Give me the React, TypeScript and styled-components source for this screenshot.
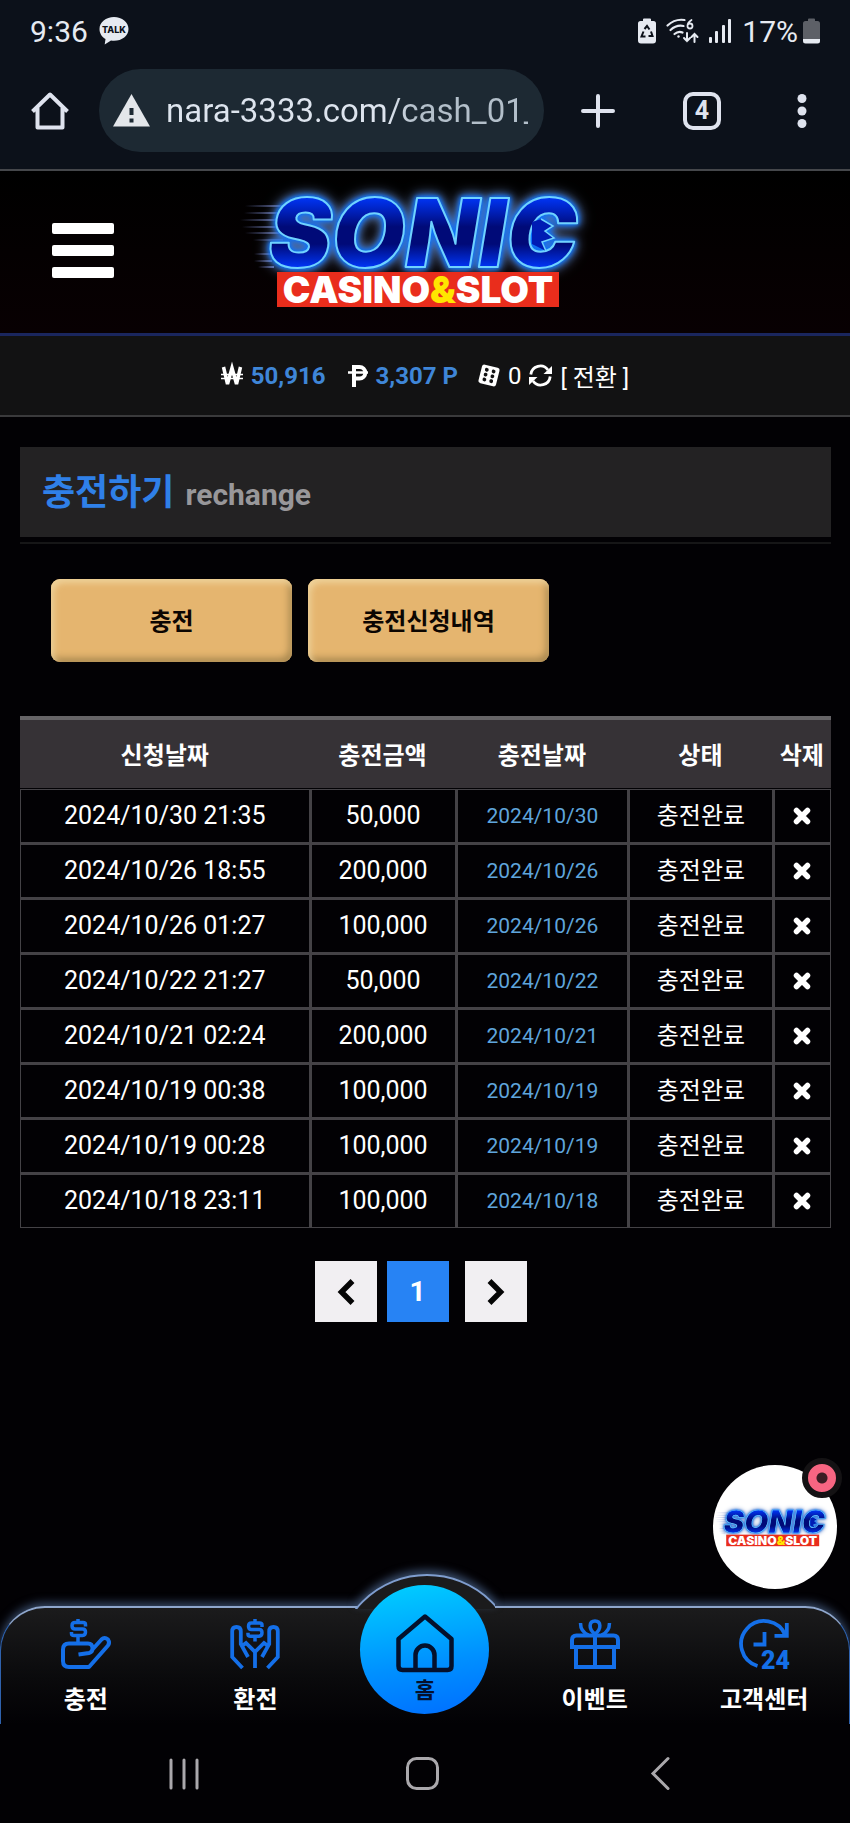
import React, { useId } from "react";
import styled, { createGlobalStyle } from "styled-components";

const GlobalStyle = createGlobalStyle`
  * { box-sizing: border-box; }
  body {
    margin: 0;
    background: #020104;
    color: #fff;
    font-family: Roboto, "Noto Sans CJK KR", sans-serif;
  }
  button { font: inherit; color: inherit; border: 0; padding: 0; background: none; cursor: pointer; }
  a { color: inherit; text-decoration: none; }
  svg { display: block; flex: none; overflow: visible; }
`;

const Screen = styled.div`
  display: flex;
  flex-direction: column;
  min-height: 100vh;
`;

/* ---------- phone and browser chrome ---------- */

const Chrome = styled.div`
  background: #0c111a;
  border-bottom: 2px solid #45474b;
`;

const StatusBar = styled.div`
  display: flex;
  align-items: center;
  justify-content: space-between;
  height: 62px;
  padding: 0 30px;
  font-size: 30px;
  color: #e6eaf1;
`;

const StatusGroup = styled.div<{ $gap: number }>`
  display: flex;
  align-items: center;
  gap: ${(p) => p.$gap}px;
`;

const BatteryText = styled.span`
  display: flex;
  align-items: center;
  gap: 5px;
`;

const Toolbar = styled.div`
  display: flex;
  align-items: flex-start;
  height: 107px;
  padding: 7px 0 0 31px;
  color: #dfe3ee;
`;

const ToolButton = styled.button<{ $width: number }>`
  display: flex;
  flex: none;
  align-items: center;
  justify-content: center;
  width: ${(p) => p.$width}px;
  height: 83px;
`;

const AddressPill = styled.label`
  display: flex;
  flex: 1;
  min-width: 0;
  align-items: center;
  gap: 16px;
  height: 83px;
  margin: 0 2px 0 30px;
  padding: 0 16px 0 14px;
  border-radius: 42px;
  background: #1d2933;
`;

const AddressInput = styled.input`
  flex: 1;
  min-width: 0;
  height: 60px;
  padding: 0;
  border: 0;
  outline: 0;
  color: transparent;
  background: linear-gradient(90deg, #dde4ee 222px, #b3bfca 250px);
  background-clip: text;
  -webkit-background-clip: text;
  font: 33px Roboto, sans-serif;
`;

/* ---------- site header ---------- */

const Header = styled.header`
  display: grid;
  grid-template-columns: 1fr auto 1fr;
  height: 165px;
  border-bottom: 3px solid #1a265e;
  background: linear-gradient(#000, #080002);
`;

const MenuButton = styled.button`
  width: 62px;
  height: 56px;
  margin: 52px 0 0 52px;
`;

const LogoLink = styled.a`
  margin-top: 5px;
`;

const Balance = styled.div`
  display: flex;
  align-items: center;
  justify-content: center;
  height: 81px;
  border-bottom: 2px solid #3a3a3c;
  background: #121213;
  font-size: 24px;
`;

const BalanceItem = styled.span<{ $after: number }>`
  display: flex;
  align-items: center;
  gap: 8px;
  margin-right: ${(p) => p.$after}px;
`;

const Amount = styled.strong`
  color: #3f86d8;
`;

const ConvertButton = styled.button`
  display: flex;
  align-items: center;
  gap: 8px;
`;

/* ---------- page content ---------- */

const Main = styled.main`
  position: relative;
  flex: 1;
  padding: 30px 19px 0 20px;
`;

const TitleBar = styled.div`
  padding-bottom: 5px;
  border-bottom: 2px solid #161617;
`;

const Title = styled.h1`
  display: flex;
  align-items: baseline;
  gap: 11px;
  height: 90px;
  margin: 0;
  padding-left: 22px;
  background: #232223;
  color: #2f80e8;
  font-size: 36px;
  line-height: 92px;
`;

const TitleNote = styled.span`
  color: #98979a;
  font-size: 30px;
`;

const Actions = styled.div`
  display: flex;
  gap: 16px;
  margin: 35px 0 54px 31px;
`;

const ActionButton = styled.button`
  width: 241px;
  height: 83px;
  padding-bottom: 2px;
  border-radius: 9px;
  background: #e5b56f;
  box-shadow: inset 3px 4px 6px #efd29a, inset -3px -4px 7px #a9884f;
  color: #0c0602;
  font-size: 24px;
  font-weight: 700;
`;

const HistoryTable = styled.table`
  width: 100%;
  table-layout: fixed;
  border-collapse: separate;
  border-spacing: 0;
  text-align: center;
`;

const Col = styled.col<{ $width: number }>`
  width: ${(p) => p.$width}%;
`;

const HeadCell = styled.th`
  height: 73px;
  padding: 0 0 2px;
  border-top: 4px solid #666467;
  border-bottom: 1px solid #020104;
  background: #363236;
  font-size: 24px;
  font-weight: 700;
  white-space: nowrap;
`;

const Cell = styled.td<{ $size?: number; $color?: string }>`
  height: 1px;
  padding: 0;
  border: 1px solid #444246;
  color: ${(p) => p.$color || "#fff"};
  font-size: ${(p) => p.$size || 25}px;
  line-height: 52px;
  & + & { border-left-width: 2px; }
  tr + tr > & { border-top-width: 2px; }
`;

const DeleteButton = styled.button`
  display: flex;
  align-items: center;
  justify-content: center;
  width: 100%;
  height: 52px;
`;

const Pagination = styled.nav`
  display: flex;
  justify-content: center;
  gap: 10px;
  margin-top: 33px;
  padding-right: 10px;
`;

const PageButton = styled.button<{ $current?: boolean }>`
  display: flex;
  align-items: center;
  justify-content: center;
  width: 62px;
  height: 61px;
  margin-right: ${(p) => (p.$current ? 6 : 0)}px;
  background: ${(p) => (p.$current ? "#2783f4" : "#f1eff2")};
  color: ${(p) => (p.$current ? "#fff" : "#050505")};
  font-size: 28px;
  font-weight: 700;
`;

const ChatBubble = styled.button`
  position: absolute;
  right: 13px;
  bottom: 17px;
  display: flex;
  align-items: center;
  justify-content: center;
  width: 124px;
  height: 124px;
  border-radius: 50%;
  background: #fff;
`;

const ChatBadge = styled.span`
  position: absolute;
  top: -7px;
  right: -5px;
  width: 40px;
  height: 40px;
  border: 6px solid #141214;
  border-radius: 50%;
  background: radial-gradient(circle, #3b1d24 5px, #f76582 6px);
`;

/* ---------- bottom navigation ---------- */

const BottomNav = styled.nav`
  position: relative;
  display: grid;
  grid-template-columns: repeat(5, 1fr);
  height: 118px;
  border: solid #2f62ad;
  border-width: 2px 1px 0;
  border-top-color: #8ea6cc;
  border-radius: 45px 45px 0 0;
  background: linear-gradient(#1b1b1c, #0a0a0c 60%, #020104);
  box-shadow: 0 -3px 10px rgba(110, 150, 205, 0.5);
`;

const Bump = styled.span`
  position: absolute;
  top: -34px;
  left: 50%;
  width: 140px;
  height: 35px;
  margin-left: -70px;
  overflow: hidden;
  filter: drop-shadow(0 -4px 4px rgba(110, 150, 205, 0.5));
  &::before {
    content: "";
    position: absolute;
    left: -20px;
    top: 0;
    width: 180px;
    height: 180px;
    border: 2px solid #7f9dce;
    border-radius: 50%;
    background: #1b1b1c;
  }
`;

const NavLink = styled.a`
  display: flex;
  flex-direction: column;
  align-items: center;
  gap: 13px;
  padding-top: 11px;
  font-size: 24px;
  font-weight: 700;
  line-height: 36px;
  white-space: nowrap;
  color: #fff;
  & > svg { color: #146fe8; }
`;

const HomeLink = styled.a`
  position: relative;
  justify-self: center;
  display: flex;
  flex-direction: column;
  align-items: center;
  width: 129px;
  height: 129px;
  margin-top: -23px;
  padding-top: 28px;
  border-radius: 50%;
  background: linear-gradient(170deg, #00ccff 5%, #0090ff 60%, #006dff);
  color: #04102c;
  font-size: 22px;
  font-weight: 700;
  line-height: 36px;
`;

const SystemBar = styled.div`
  position: relative;
  display: grid;
  grid-template-columns: repeat(3, 1fr);
  height: 99px;
  padding: 0 70px 0 65px;
  background: #020104;
  color: #aaa8ac;
`;

const SystemButton = styled.button`
  display: flex;
  align-items: center;
  justify-content: center;
`;

/* ---------- drawings ---------- */

function Logo({ width }: { width: number }) {
  const id = useId().replace(/:/g, "");
  return (
    <svg width={width} viewBox="0 0 370 148" role="img" aria-label="Sonic Casino & Slot">
      <defs>
        <linearGradient id={id} x1="0" y1="0" x2="0" y2="1">
          <stop offset="0.2" stopColor="#0034f4" />
          <stop offset="0.45" stopColor="#000a78" />
          <stop offset="0.6" stopColor="#000a78" />
          <stop offset="0.8" stopColor="#0034f4" />
        </linearGradient>
        <linearGradient id={id + "s"} x1="0" y1="0" x2="1" y2="0">
          <stop offset="0" stopColor="#7d8cd0" stopOpacity="0" />
          <stop offset="1" stopColor="#7d8cd0" stopOpacity="0.8" />
        </linearGradient>
      </defs>
      <g fill={`url(#${id}s)`}>
        <rect x="5" y="29" width="40" height="2" />
        <rect x="4" y="36" width="36" height="2" />
        <rect x="0" y="43" width="40" height="2" />
        <rect x="2" y="50" width="38" height="2" />
        <rect x="5" y="56" width="36" height="2" />
        <rect x="13" y="63" width="30" height="2" />
        <rect x="14" y="77" width="18" height="2" />
        <rect x="14" y="84" width="18" height="2" />
        <rect x="18" y="90" width="16" height="2" />
      </g>
      <g style={{ filter: "drop-shadow(0 0 2px #0a78ff) drop-shadow(0 0 3px #0a62e8) drop-shadow(0 0 6px #6f8fc8)" }}>
        <text
          x="183"
          y="91"
          textAnchor="middle"
          fontFamily="Inter, sans-serif"
          fontWeight="900"
          fontStyle="italic"
          fontSize="95"
          fill={`url(#${id})`}
          stroke="#6fd2ff"
          strokeWidth="2"
          strokeLinejoin="round"
        >
          SONIC
        </text>
        <path d="M292 46 301 43l12 7-8 5 9 7-12 4 4 9-14-7Z" fill="#001cb4" />
        <path d="m301 43 12 7-8 5 9 7-12 4 4 9" fill="none" stroke="#6fd2ff" strokeWidth="1.500" />
      </g>
      <rect x="37" y="96" width="282" height="35" fill="#e92d1c" />
      <text
        x="178"
        y="127"
        textAnchor="middle"
        fontFamily="Inter, sans-serif"
        fontWeight="900"
        fontSize="37"
        fill="#fff"
      >
        CASINO<tspan fill="#ffe600">&amp;</tspan>SLOT
      </text>
    </svg>
  );
}

const TalkIcon = () => (
  <svg width="30" height="28" viewBox="0 0 30 28" fill="#e6eaf1">
    <path d="M15 0C7 0 .5 5 .5 12c0 4.500 2.500 8 6 10l-.8 5.500L12 23.500c1 .3 2 .3 3 .3 8 0 14.500-5 14.500-11.800S23 0 15 0Z" />
    <text x="15" y="15.500" textAnchor="middle" fontFamily="Inter, sans-serif" fontWeight="800" fontSize="9" fill="#0c111a">TALK</text>
  </svg>
);

const RecycleBatteryIcon = () => (
  <svg width="18" height="26" viewBox="0 0 18 26">
    <path d="M5 3V1.500Q5 .5 6 .5h6q1 0 1 1V3h2.500Q18 3 18 5.500v17q0 3-3 3H3q-3 0-3-3v-17Q0 3 2.500 3Z" fill="#e6eaf1" />
    <path d="M6.500 11 9 8l2.500 3.500M13 13.500l1.500 4.500h-4M7.500 18.500H3.500L5.500 13.500" fill="none" stroke="#0c111a" strokeWidth="2" />
  </svg>
);

const WifiIcon = () => (
  <svg width="33" height="26" viewBox="0 0 33 26" fill="none" stroke="#e6eaf1" strokeWidth="2.200" strokeLinecap="round">
    <path d="M1.500 7.500Q9 .5 18.500 2M4.500 12q6-5.500 13-4M8.500 16q4-3.500 8-1.500" />
    <circle cx="12.500" cy="18.500" r="1.200" fill="#e6eaf1" stroke="none" />
    <path d="M25.500 2q-4 2.500-4 6a2.500 2.500 0 1 0 2.500-2.500q-1.500 0-2.300 1.300" strokeWidth="1.800" />
    <path d="M21 15v8m-3-3 3 3 3-3M28.500 24v-8m-3 3 3-3 3 3" strokeWidth="2" />
  </svg>
);

const SignalIcon = () => (
  <svg width="23" height="24" viewBox="0 0 23 24" fill="#e6eaf1">
    <rect x="0" y="18" width="3" height="6" rx="1" />
    <rect x="6" y="12" width="3" height="12" rx="1" />
    <rect x="13" y="6" width="3" height="18" rx="1" />
    <rect x="19" y="0" width="3" height="24" rx="1" />
  </svg>
);

const BatteryIcon = () => (
  <svg width="17" height="26" viewBox="0 0 17 26">
    <path d="M5 3V1.500Q5 .5 6 .5h5q1 0 1 1V3h2.500Q17 3 17 5.500V21H0V5.500Q0 3 2.500 3Z" fill="#5d6067" />
    <path d="M0 21h17v2q0 2.500-2.500 2.500h-12Q0 25.500 0 23Z" fill="#e6eaf1" />
  </svg>
);

const BrowserHomeIcon = () => (
  <svg width="38" height="38" viewBox="0 0 38 38" fill="none" stroke="currentColor" strokeWidth="4" strokeLinejoin="round">
    <path d="M1.500 19.500 19 2.500l17.500 17M6.500 16v19.500h25V16" />
  </svg>
);

const WarningIcon = () => (
  <svg width="37" height="33" viewBox="0 0 37 33">
    <path d="M18.500 0 37 32.500H0Z" fill="#e3e6ea" />
    <path d="M16.500 14h4v7h-4zM16.500 24.500h4v4h-4z" fill="#1d2933" />
  </svg>
);

const PlusIcon = () => (
  <svg width="34" height="34" viewBox="0 0 34 34" stroke="currentColor" strokeWidth="4" strokeLinecap="round">
    <path d="M17 2v30M2 17h30" />
  </svg>
);

const TabCount = styled.span`
  display: flex;
  align-items: center;
  justify-content: center;
  width: 38px;
  height: 38px;
  border: 4px solid currentColor;
  border-radius: 10px;
  font-size: 25px;
  font-weight: 700;
`;

const DotsIcon = () => (
  <svg width="10" height="34" viewBox="0 0 10 34" fill="currentColor">
    <circle cx="5" cy="4.500" r="4.500" />
    <circle cx="5" cy="17" r="4.500" />
    <circle cx="5" cy="29.500" r="4.500" />
  </svg>
);

const MenuIcon = () => (
  <svg width="62" height="56" viewBox="0 0 62 56" fill="#fff">
    <rect y="0" width="62" height="11" rx="2" />
    <rect y="22" width="62" height="11" rx="2" />
    <rect y="44" width="62" height="11" rx="2" />
  </svg>
);

const WonIcon = () => (
  <svg width="22" height="20" viewBox="0 0 22 20" fill="none" stroke="#fff">
    <path d="M2.500 1 6.500 18 11 2l4.500 16 4-17" strokeWidth="3.500" />
    <path d="M0 8.500h22M0 12.500h22" strokeWidth="1.500" />
  </svg>
);

const PesoIcon = () => (
  <svg width="20" height="22" viewBox="0 0 20 22" fill="none" stroke="#fff">
    <path d="M6 22V2h5.500a5 5 0 0 1 0 11.500H6" strokeWidth="4" />
    <path d="M0 7.500h20" strokeWidth="2.500" />
  </svg>
);

const DiceIcon = () => (
  <svg width="22" height="23" viewBox="0 0 22 23">
    <g transform="rotate(14 11 11.500)">
      <rect x="2" y="2" width="18" height="19" rx="2.500" fill="#fff" />
      <g fill="#121213">
        <circle cx="7.500" cy="6.500" r="1.900" />
        <circle cx="14.500" cy="6.500" r="1.900" />
        <circle cx="7.500" cy="11.500" r="1.900" />
        <circle cx="14.500" cy="11.500" r="1.900" />
        <circle cx="7.500" cy="16.500" r="1.900" />
        <circle cx="14.500" cy="16.500" r="1.900" />
      </g>
    </g>
  </svg>
);

const SyncIcon = () => (
  <svg width="23" height="23" viewBox="0 0 23 23" fill="none" stroke="#fff" strokeWidth="2.800">
    <path d="M1.800 10.500A9.500 9.500 0 0 1 19 6M21.200 12.500A9.500 9.500 0 0 1 4 17" />
    <path d="M23 2v8h-8.500ZM0 21v-8h8.500Z" fill="#fff" stroke="none" />
  </svg>
);

const CrossIcon = () => (
  <svg width="18" height="18" viewBox="0 0 18 18" stroke="#fff" strokeWidth="5.500" strokeLinecap="round">
    <path d="m3.500 3.500 11 11M14.500 3.500l-11 11" />
  </svg>
);

const ChevronIcon = ({ next }: { next?: boolean }) => (
  <svg width="18" height="28" viewBox="0 0 18 28" fill="none" stroke="currentColor" strokeWidth="5.500">
    <path d={next ? "m2.500 3 11 11-11 11" : "m15.500 3-11 11 11 11"} />
  </svg>
);

const DepositIcon = () => (
  <svg width="50" height="50" viewBox="0 0 50 50" fill="none" stroke="currentColor" strokeWidth="4" strokeLinejoin="round">
    <path d="M17.500 35.500 28 34q3.500-.8 3.500-4.500 0-5-4.500-5H8q-6 0-6 6v11.500q0 6 6 6h20l19-21.500q2-3 0-6-3.500-3-6.500 0L31 31" />
    <path d="M24.500 7.500V5.500q0-2-2.500-2h-8q-3 0-3 3.200t3 3.200h7.500q3 0 3 3.200t-3 3.400H13q-2.500 0-2.500-2v-1.500M17 0v4M17 16.500v7.500" strokeWidth="3.500" />
  </svg>
);

const WithdrawIcon = () => (
  <svg width="50" height="50" viewBox="0 0 50 50" fill="none" stroke="currentColor" strokeWidth="3.800">
    <path d="M12.500 49 2.200 38V12.500q0-4.500 4.300-4.500t4.300 4.500V25L18 38M12 27l4-3 9 9v16M37.500 49l10.300-11V12.500q0-4.500-4.300-4.500t-4.300 4.500V25L32 38M38 27l-4-3-9 9" />
    <path d="M32 8V6q0-2-2.500-2h-8q-3 0-3 3.200t3 3.400H29q3 0 3 3.200t-3 3.400h-8.500q-2.500 0-2.500-2v-1.500M25 0v4M25 17.500v5" strokeWidth="3.500" />
  </svg>
);

const GiftIcon = () => (
  <svg width="50" height="50" viewBox="0 0 50 50" fill="none" stroke="currentColor" strokeWidth="4">
    <path d="M2 28v-7q0-4.500 4.500-4.500h37q4.500 0 4.500 4.500v7ZM6 28v20h38V28M25 16v32" />
    <path d="M25 15c-7-5-6-13 0-13s7 8 0 13ZM10.500 4c0 6 3 10 8 12M39.500 4c0 6-3 10-8 12" strokeWidth="3.500" />
  </svg>
);

const SupportIcon = () => (
  <svg width="50" height="50" viewBox="0 0 50 50" fill="none" stroke="currentColor" strokeWidth="3.800">
    <path d="M18.500 47A23 23 0 1 1 46.500 16.500" />
    <path d="M47.800 4v12.800H35.500M25.500 13v12.500H14.500" />
    <text x="22" y="50" fontFamily="Roboto, sans-serif" fontWeight="900" fontSize="25" fill="currentColor" stroke="none">24</text>
  </svg>
);

const HomeIcon = () => (
  <svg width="60" height="60" viewBox="0 0 60 60" fill="none" stroke="currentColor" strokeWidth="4.500" strokeLinejoin="round">
    <path d="M3.500 26 30 3.500 56.500 26v27q0 4-4 4h-45q-4 0-4-4Z" />
    <path d="M20.500 57V42a9.500 9.500 0 0 1 19 0v15" />
  </svg>
);

const RecentsIcon = () => (
  <svg width="30" height="32" viewBox="0 0 30 32" stroke="currentColor" strokeWidth="3" strokeLinecap="round">
    <path d="M2 2v28M15 2v28M28 2v28" />
  </svg>
);

const CircleHomeIcon = () => (
  <svg width="33" height="33" viewBox="0 0 33 33" fill="none" stroke="currentColor" strokeWidth="3">
    <rect x="1.500" y="1.500" width="30" height="30" rx="9" />
  </svg>
);

const BackIcon = () => (
  <svg width="19" height="33" viewBox="0 0 19 33" fill="none" stroke="currentColor" strokeWidth="3" strokeLinecap="round">
    <path d="M17 1.500 2 16.500l15 15" />
  </svg>
);

/* ---------- data ---------- */

const columns = [
  { label: "신청날짜", width: 35.7 },
  { label: "충전금액", width: 18 },
  { label: "충전날짜", width: 21.3 },
  { label: "상태", width: 17.8 },
  { label: "삭제", width: 7.2 },
];

const requests = [
  { at: "2024/10/30 21:35", amount: "50,000" },
  { at: "2024/10/26 18:55", amount: "200,000" },
  { at: "2024/10/26 01:27", amount: "100,000" },
  { at: "2024/10/22 21:27", amount: "50,000" },
  { at: "2024/10/21 02:24", amount: "200,000" },
  { at: "2024/10/19 00:38", amount: "100,000" },
  { at: "2024/10/19 00:28", amount: "100,000" },
  { at: "2024/10/18 23:11", amount: "100,000" },
];

export default function App() {
  return (
    <Screen>
      <GlobalStyle />
      <Chrome>
        <StatusBar>
          <StatusGroup $gap={11}>
            <span>9:36</span>
            <TalkIcon />
          </StatusGroup>
          <StatusGroup $gap={10}>
            <RecycleBatteryIcon />
            <WifiIcon />
            <SignalIcon />
            <BatteryText>
              17%
              <BatteryIcon />
            </BatteryText>
          </StatusGroup>
        </StatusBar>
        <Toolbar>
          <ToolButton $width={38} aria-label="Home"><BrowserHomeIcon /></ToolButton>
          <AddressPill>
            <WarningIcon />
            <AddressInput aria-label="Address" defaultValue="nara-3333.com/cash_01_" />
          </AddressPill>
          <ToolButton $width={104} aria-label="New tab"><PlusIcon /></ToolButton>
          <ToolButton $width={104} aria-label="Tabs"><TabCount>4</TabCount></ToolButton>
          <ToolButton $width={96} aria-label="More"><DotsIcon /></ToolButton>
        </Toolbar>
      </Chrome>

      <Header>
        <MenuButton aria-label="Menu"><MenuIcon /></MenuButton>
        <LogoLink href="#"><Logo width={370} /></LogoLink>
      </Header>

      <Balance>
        <BalanceItem $after={22}><WonIcon /><Amount>50,916</Amount></BalanceItem>
        <BalanceItem $after={20}><PesoIcon /><Amount>3,307 P</Amount></BalanceItem>
        <BalanceItem $after={8}><DiceIcon />0</BalanceItem>
        <ConvertButton><SyncIcon />[ 전환 ]</ConvertButton>
      </Balance>

      <Main>
        <TitleBar>
          <Title>충전하기<TitleNote>rechange</TitleNote></Title>
        </TitleBar>
        <Actions>
          <ActionButton>충전</ActionButton>
          <ActionButton>충전신청내역</ActionButton>
        </Actions>
        <HistoryTable>
          <colgroup>
            {columns.map((c) => <Col key={c.label} $width={c.width} />)}
          </colgroup>
          <thead>
            <tr>
              {columns.map((c) => <HeadCell key={c.label} scope="col">{c.label}</HeadCell>)}
            </tr>
          </thead>
          <tbody>
            {requests.map((r) => (
              <tr key={r.at}>
                <Cell>{r.at}</Cell>
                <Cell>{r.amount}</Cell>
                <Cell $size={21} $color="#5fa5dc">{r.at.slice(0, 10)}</Cell>
                <Cell $size={24}>충전완료</Cell>
                <Cell><DeleteButton aria-label="삭제"><CrossIcon /></DeleteButton></Cell>
              </tr>
            ))}
          </tbody>
        </HistoryTable>
        <Pagination>
          <PageButton aria-label="Previous"><ChevronIcon /></PageButton>
          <PageButton $current>1</PageButton>
          <PageButton aria-label="Next"><ChevronIcon next /></PageButton>
        </Pagination>
        <ChatBubble aria-label="Chat">
          <Logo width={122} />
          <ChatBadge />
        </ChatBubble>
      </Main>

      <BottomNav>
        <Bump />
        <NavLink href="#"><DepositIcon />충전</NavLink>
        <NavLink href="#"><WithdrawIcon />환전</NavLink>
        <HomeLink href="#"><HomeIcon />홈</HomeLink>
        <NavLink href="#"><GiftIcon />이벤트</NavLink>
        <NavLink href="#"><SupportIcon />고객센터</NavLink>
      </BottomNav>
      <SystemBar>
        <SystemButton aria-label="Recents"><RecentsIcon /></SystemButton>
        <SystemButton aria-label="Home screen"><CircleHomeIcon /></SystemButton>
        <SystemButton aria-label="Back"><BackIcon /></SystemButton>
      </SystemBar>
    </Screen>
  );
}
